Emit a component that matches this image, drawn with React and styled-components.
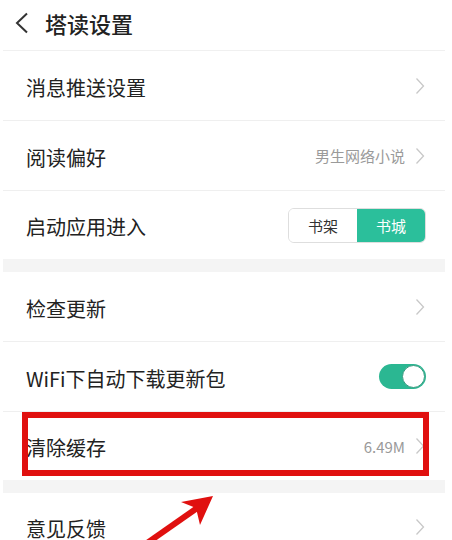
import styled, { createGlobalStyle } from "styled-components";

const GlobalStyle = createGlobalStyle`
  body {
    margin: 0;
    background: #fff;
    font-family: "Noto Sans CJK SC", "Noto Sans", sans-serif;
  }
`;

const Page = styled.div`
  position: relative;
  height: 540px;
  overflow: hidden;
  padding: 0 7px 0 3px;
`;

const Header = styled.div`
  box-sizing: border-box;
  height: 51px;
  display: flex;
  align-items: center;
  gap: 16px;
  padding: 0 0 5px 12px;
  border-bottom: 1px solid #f0f0f0;
`;

const Title = styled.div`
  font-size: 22px;
  font-weight: 500;
  color: #222;
`;

const Group = styled.div``;

const Band = styled.div`
  height: 13px;
  background: #f4f4f4;
`;

const Row = styled.div`
  position: relative;
  box-sizing: border-box;
  height: 70px;
  display: flex;
  align-items: center;
  padding: 0 20px 0 23px;
  border-bottom: 1px solid #efefef;
  &:last-child {
    border-bottom: none;
    height: 68px;
  }
`;

const Label = styled.div`
  flex: 1;
  font-size: 20px;
  color: #222;
  padding-top: 3px;
`;

const Value = styled.span`
  font-size: 15px;
  color: #9a9a9a;
  margin-right: 10px;
`;

const Segmented = styled.div`
  display: flex;
  width: 138px;
  height: 35px;
  border: 1px solid #dedede;
  border-radius: 6px;
  overflow: hidden;
  box-sizing: border-box;
  margin-right: -1px;
`;

const Segment = styled.div`
  flex: 1;
  display: flex;
  align-items: center;
  justify-content: center;
  font-size: 15px;
  color: ${(p) => (p.active ? "#fff" : "#333")};
  background: ${(p) => (p.active ? "#2bbf9b" : "#fff")};
`;

const Switch = styled.div`
  width: 47px;
  height: 25px;
  border-radius: 13px;
  background: #2bb792;
  display: flex;
  justify-content: flex-end;
  align-items: center;
  padding: 1px;
  box-sizing: border-box;
  margin-right: -1px;
`;

const Knob = styled.div`
  width: 23px;
  height: 23px;
  border-radius: 50%;
  background: #fff;
  box-sizing: border-box;
  border: 1px solid #3a9a80;
`;

const Highlight = styled.div`
  position: absolute;
  top: 0;
  bottom: 4px;
  left: 19px;
  right: 16px;
  border: 6px solid #e0100f;
  pointer-events: none;
`;

const ArrowLayer = styled.svg`
  position: absolute;
  left: 0;
  top: 0;
  pointer-events: none;
`;

const Chevron = () => (
  <svg width="10" height="18" viewBox="0 0 10 18">
    <path d="M1.5 1.5 L8.5 9 L1.5 16.5" fill="none" stroke="#c8c8c8" strokeWidth="1.3" />
  </svg>
);

const Back = () => (
  <svg width="14" height="22" viewBox="0 0 14 22">
    <path d="M12 1.5 L2 11 L12 20.5" fill="none" stroke="#333" strokeWidth="2" />
  </svg>
);

export default function App() {
  return (
    <>
      <GlobalStyle />
      <Page>
        <Header>
          <Back />
          <Title>塔读设置</Title>
        </Header>

        <Group>
          <Row>
            <Label>消息推送设置</Label>
            <Chevron />
          </Row>
          <Row>
            <Label>阅读偏好</Label>
            <Value>男生网络小说</Value>
            <Chevron />
          </Row>
          <Row>
            <Label>启动应用进入</Label>
            <Segmented>
              <Segment>书架</Segment>
              <Segment active>书城</Segment>
            </Segmented>
          </Row>
        </Group>

        <Band />

        <Group>
          <Row>
            <Label>检查更新</Label>
            <Chevron />
          </Row>
          <Row>
            <Label>WiFi下自动下载更新包</Label>
            <Switch>
              <Knob />
            </Switch>
          </Row>
          <Row>
            <Label>清除缓存</Label>
            <Value>6.49M</Value>
            <Chevron />
            <Highlight />
          </Row>
        </Group>

        <Band />

        <Group>
          <Row>
            <Label>意见反馈</Label>
            <Chevron />
          </Row>
        </Group>

        <ArrowLayer width="452" height="540" viewBox="0 0 452 540">
          <line x1="140" y1="548" x2="200" y2="506" stroke="#e0100f" strokeWidth="6" />
          <polygon points="213,496 181,502 196,508 200,525" fill="#e0100f" />
        </ArrowLayer>
      </Page>
    </>
  );
}
